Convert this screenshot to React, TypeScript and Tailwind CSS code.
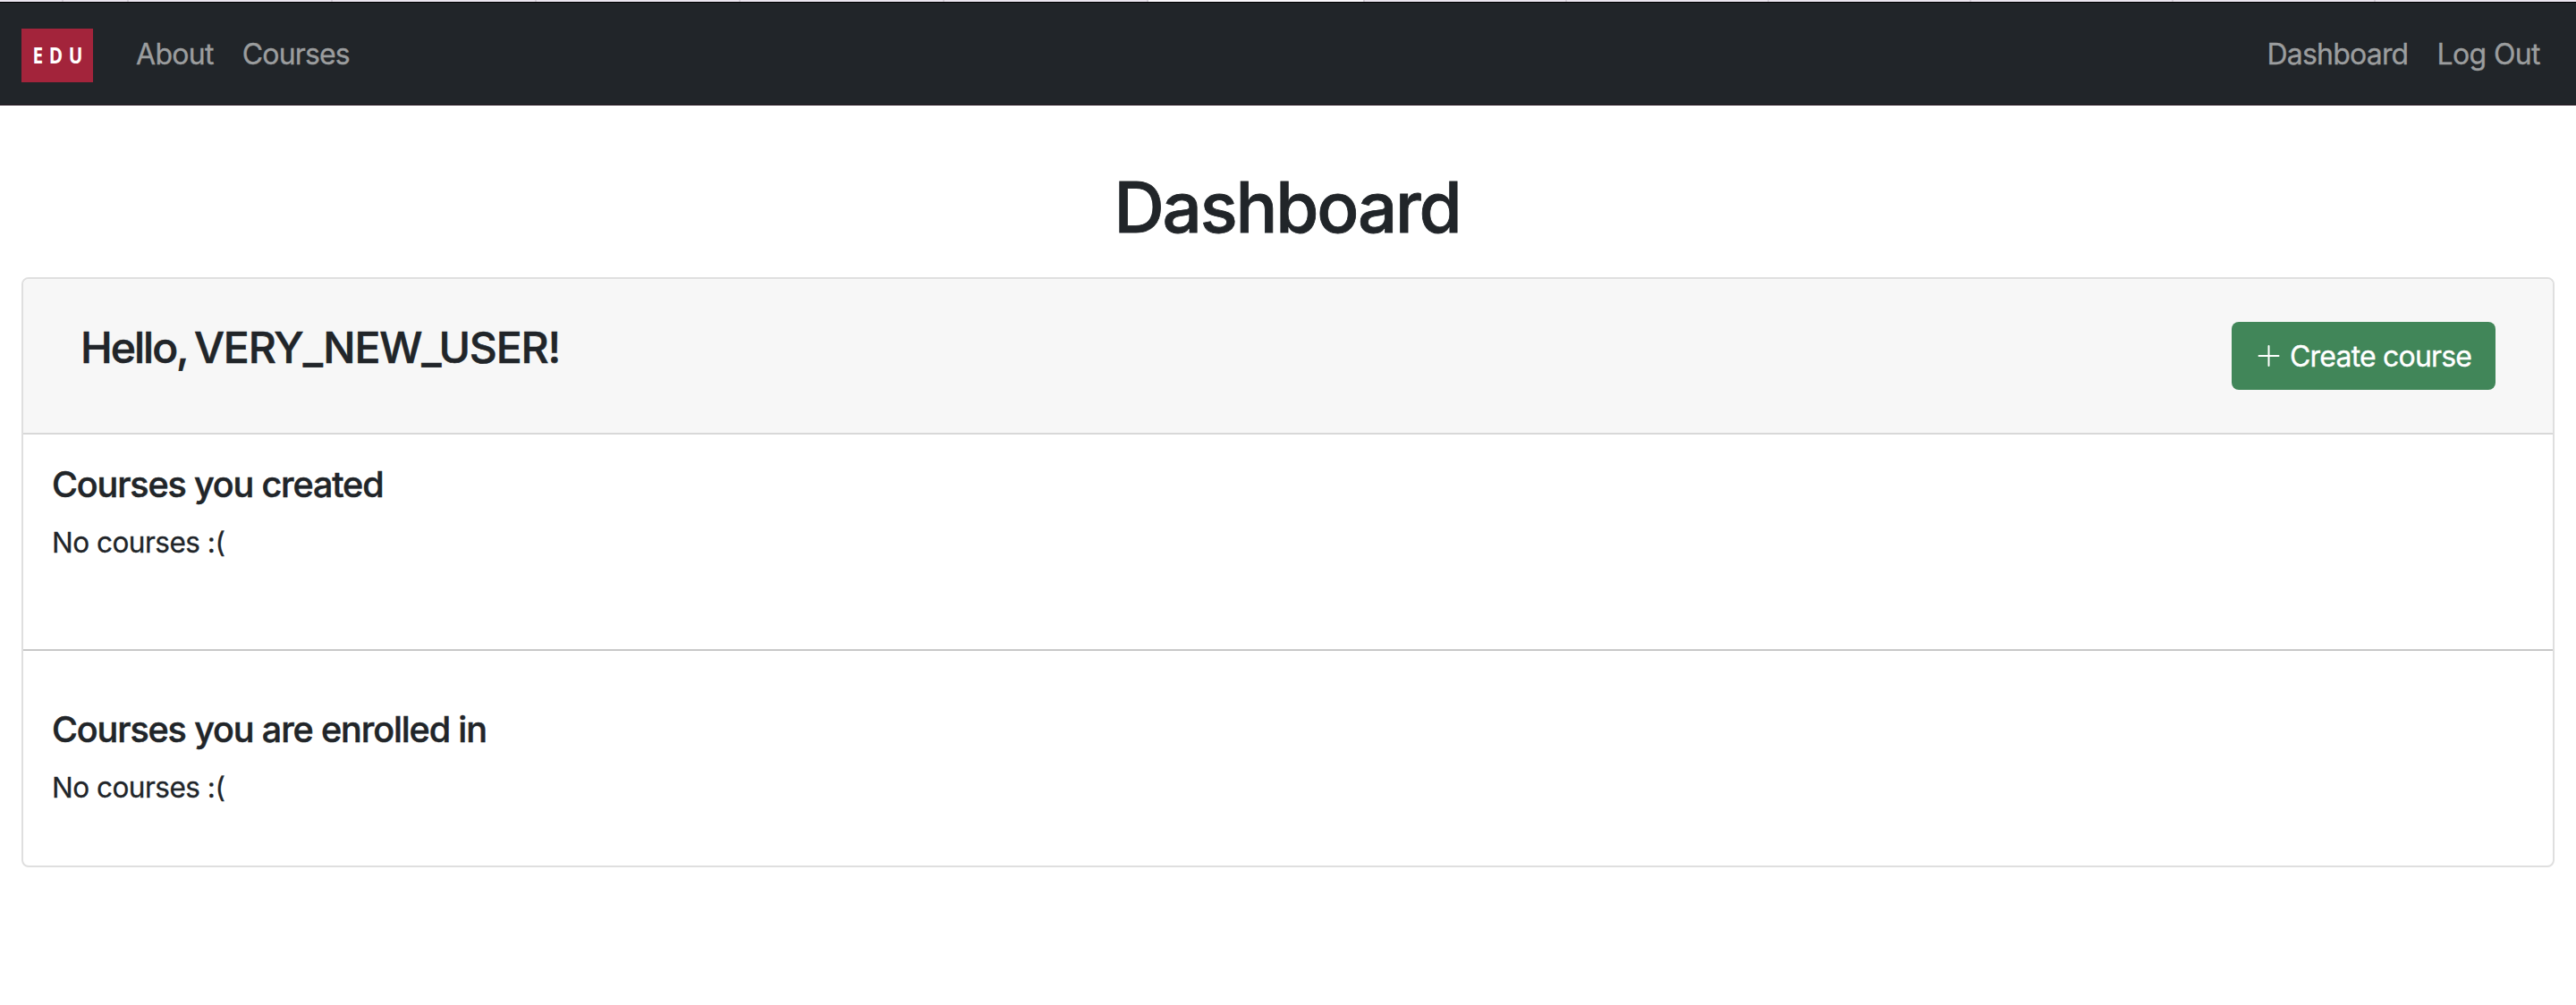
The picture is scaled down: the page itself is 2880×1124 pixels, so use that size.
function NavLink({ children, className }: { children: string; className: string }) {
  return (
    <a href="#" className={`block whitespace-nowrap text-[32px] leading-[48px] text-[#9b9d9e] [-webkit-text-stroke:0.35px] ${className}`}>
      {children}
    </a>
  );
}

function CourseSection({ title, titleClass }: { title: string; titleClass: string }) {
  return (
    <section>
      <h5 className={`text-[39.5px] font-medium leading-[48px] [-webkit-text-stroke:0.5px] ${titleClass}`}>{title}</h5>
      <p className="mt-[17px] text-[31.5px] leading-[48px] tracking-[-0.5px] [-webkit-text-stroke:0.3px]">No courses :(</p>
    </section>
  );
}

const stripWidths = [
  "w-[71px]",
  "w-[73px]",
  "w-[228px]",
  "w-[228px]",
  "w-[228px]",
  "w-[228px]",
  "w-[228px]",
  "w-[242px] bg-[#fbf8fd]",
  "w-[226px]",
  "w-[226px]",
  "w-[226px]",
  "w-[226px]",
  "w-[226px]",
];

export default function App() {
  return (
    <div className="flex h-[1124px] flex-col bg-white font-['Inter','Liberation_Sans',sans-serif] text-[#212529]">
      <div className="flex h-[2px] bg-[#ece6f0]">
        {stripWidths.map((width, i) => (
          <div key={i} className={`shrink-0 border-r-2 border-[#d8d2dc] ${width}`} />
        ))}
      </div>
      <nav className="flex h-[116px] items-center border-y border-t-black border-b-[#2a1c25] bg-[#212529] pl-6">
        <a href="#" className="mt-[4px] flex h-[60px] w-[80px] items-center justify-center bg-[#a3243b]">
          <span className="ml-[7px] -mt-[2px] scale-x-[0.83] font-['Open_Sans',sans-serif] text-[25px] font-bold leading-none tracking-[8px] text-white">EDU</span>
        </a>
        <div className="ml-[48px] mt-[2px] flex gap-[32px]">
          <NavLink className="tracking-[-0.7px]">About</NavLink>
          <NavLink className="tracking-[-0.85px]">Courses</NavLink>
        </div>
        <div className="ml-auto mr-[40px] mt-[2px] flex gap-[32px]">
          <NavLink className="tracking-[-0.8px]">Dashboard</NavLink>
          <NavLink className="tracking-[-0.6px]">Log Out</NavLink>
        </div>
      </nav>

      <h1 className="mt-[66px] pr-[2px] text-center text-[78px] font-medium leading-[96px] tracking-[-2.2px] [-webkit-text-stroke:0.8px]">Dashboard</h1>

      <main className="mx-6 mt-[30px] h-[660px] rounded-lg border-2 border-[#dfdfdf]">
        <header className="flex h-[174px] items-start justify-between rounded-t-md border-b-2 border-[#d8d8d8] bg-[#f7f7f7] pl-[64px] pr-[64px] pt-[48px]">
          <h4 className="whitespace-nowrap text-[48px] font-medium leading-[58px] tracking-[-1.15px] [-webkit-text-stroke:0.6px]">
            <span className="tracking-[-2px] [word-spacing:-3px]">Hello, </span>VERY_NEW_USER!
          </h4>
          <button className="flex h-[76px] w-[295px] items-center rounded-lg bg-[#418659] pl-[26px] text-white">
            <svg className="h-8 w-8" viewBox="0 0 32 32" stroke="currentColor" strokeWidth="2" strokeLinecap="round">
              <path d="M15.5 5v22M4.5 16h22" />
            </svg>
            <span className="ml-[7px] mt-[2px] whitespace-nowrap text-[32px] leading-[48px] tracking-[-0.8px] [-webkit-text-stroke:0.35px]">Create course</span>
          </button>
        </header>
        <div className="px-[32px] pt-[32px]">
          <CourseSection title="Courses you created" titleClass="tracking-[-1.15px]" />
        </div>
        <hr className="mt-[95px] border-0 border-t-2 border-[#c8c8c8]" />
        <div className="px-[32px] pt-[64px]">
          <CourseSection title="Courses you are enrolled in" titleClass="tracking-[-1.12px]" />
        </div>
      </main>
    </div>
  );
}
